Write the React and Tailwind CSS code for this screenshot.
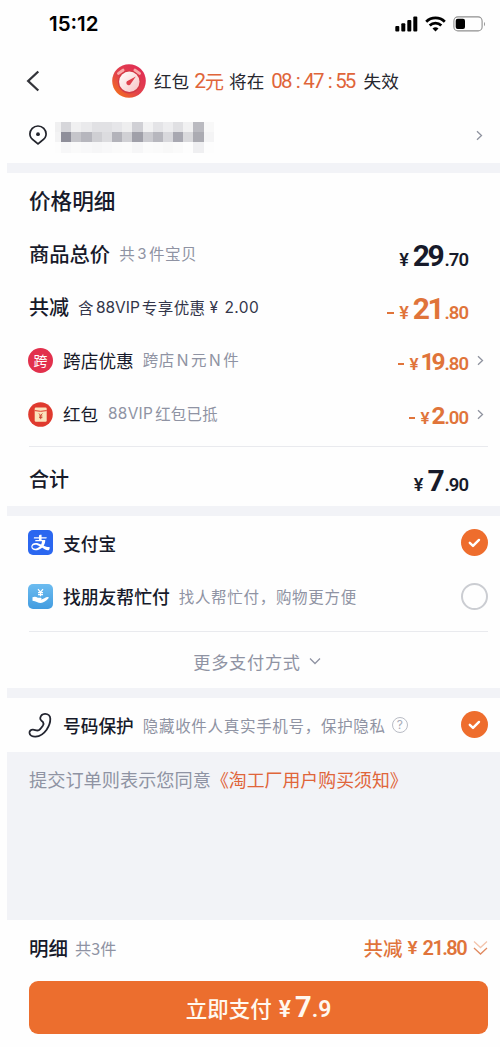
import React from "react";
import { AiOutlineAlipay } from "react-icons/ai";

const CJK = "font-['Noto_Sans_CJK_SC',sans-serif]";

const MOSAIC = [
  ["#f0f0f1", "#d6d6da", "#f0f0f1", "#eaeaec", "#e1e1e4", "#e1e1e4", "#e6e6e9", "#eeeeef", "#d0d0d5", "#f2f2f3", "#e4e4e7", "#ededef", "#e0e0e3", "#f1f1f2", "#babac0", "#f8f8f8"],
  ["#f3f3f4", "#8f8f9a", "#c5c5ca", "#b6b6bd", "#cfcfd3", "#dcdcdf", "#b3b3ba", "#d0d0d4", "#a0a0a9", "#cbcbd0", "#b7b7be", "#d8d8dc", "#a8a8b1", "#d9d9dc", "#ababb2", "#f4f4f5"],
  ["#fdfdfd", "#f7f7f8", "#fafafa", "#f8f8f9", "#f6f6f7", "#f8f8f9", "#fafafa", "#fbfbfb", "#f6f6f7", "#fbfbfb", "#fafafa", "#f8f8f8", "#fafafa", "#fdfdfd", "#efeff1", "#fdfdfd"],
];

const Chevron = () => (
  <svg width="7" height="11" viewBox="0 0 7 11" fill="none" stroke="#8f939f" strokeWidth="1.3">
    <path d="M1 1.2 5.5 5.5 1 9.8" />
  </svg>
);

const Check = () => (
  <div className="flex h-[27px] w-[27px] items-center justify-center rounded-full bg-[#ee6d2d]">
    <svg width="13" height="10" viewBox="0 0 13 10" fill="none" stroke="#fff" strokeWidth="2.4" strokeLinecap="round" strokeLinejoin="round">
      <path d="m1.8 4.8 3.2 3.1 6-6" />
    </svg>
  </div>
);

const Band = () => <div className="h-[10px] bg-[#f2f3f7]" />;

// big: 30px integer part, otherwise 25px
const Price = ({ minus, int, dec, big }) => (
  <div className="flex items-baseline font-['Roboto'] font-bold leading-none">
    {minus && (
      <span className={big ? "mb-[10px] mr-[5px] h-[2px] w-[7px] self-end bg-current" : "mb-[9px] mr-[5px] h-[2px] w-[6px] self-end bg-current"} />
    )}
    <span className={big ? "mr-[4px] text-[18px] font-semibold" : "mr-[2px] text-[17px] font-semibold"}>¥</span>
    <span className={big ? "text-[30px] tracking-[-2.6px]" : "text-[24.5px] tracking-[-3px]"}>{int}</span>
    <span className={big ? "ml-[2.600px] text-[18.5px] font-semibold tracking-[-1px]" : "ml-[2px] text-[18.5px] font-semibold tracking-[-1px]"}>.{dec}</span>
  </div>
);

const Row = ({ children }) => (
  <div className="flex h-[53.6px] items-center justify-between pl-[22px] pr-[12px]">{children}</div>
);

const Timer = () => (
  <svg width="34" height="34" viewBox="0 0 34 34" className="shrink-0">
    <defs>
      <linearGradient id="ring" x1="0.9" y1="0.1" x2="0.15" y2="0.9">
        <stop offset="0" stopColor="#e02c55" />
        <stop offset="0.6" stopColor="#e2434b" />
        <stop offset="1" stopColor="#f26b22" />
      </linearGradient>
      <linearGradient id="dial" x1="0" y1="0" x2="1" y2="1">
        <stop offset="0" stopColor="#fff" />
        <stop offset="1" stopColor="#f8c3c3" />
      </linearGradient>
    </defs>
    <circle cx="17" cy="17" r="16.8" fill="url(#ring)" />
    <path d="M6.5 9.4 11 6.2M27.5 9.4 23 6.2" stroke="#f9a8a8" strokeWidth="3" strokeLinecap="round" />
    <circle cx="17.3" cy="18" r="11.4" fill="#d23a45" />
    <circle cx="17.3" cy="17.8" r="10.2" fill="url(#dial)" />
    <path d="m23.8 12.4-5 7.3a2.3 2.3 0 1 1-2.9-3z" fill="#df3f4b" />
  </svg>
);

const StatusBar = () => (
  <div className="flex h-[47px] items-center justify-between pl-[42px] pr-[14px]">
    <span className="mt-[2px] font-['Inter'] text-[20.5px] font-semibold leading-none text-black">15:12</span>
    <div className="flex items-center gap-[7px]">
      <svg width="23" height="16" viewBox="0 0 23 16">
        <rect x="0.3" y="10" width="4" height="5.4" rx="1" />
        <rect x="6.3" y="7.3" width="4" height="8.1" rx="1" />
        <rect x="12.3" y="4" width="4" height="11.4" rx="1" />
        <rect x="18.3" y="0.6" width="4" height="14.8" rx="1" />
      </svg>
      <svg width="21" height="16" viewBox="0 0 21 16" fill="none" stroke="#000" strokeWidth="2.8">
        <path d="M1.2 5.7a13.4 13.4 0 0 1 18.6 0" />
        <path d="M4.7 9.4a8.3 8.3 0 0 1 11.6 0" />
        <path d="m10.5 15.6 3-3a4.3 4.3 0 0 0-6 0z" fill="#000" stroke="none" />
      </svg>
      <svg width="33" height="16" viewBox="0 0 33 16">
        <rect x="0.9" y="0.9" width="28.2" height="14" rx="4" fill="none" stroke="#8f8f8f" strokeWidth="1.1" />
        <rect x="2.7" y="2.7" width="9.3" height="10.4" rx="2" />
        <path d="M31 6v4.2c1.3-.7 1.3-3.5 0-4.2z" fill="#8f8f8f" />
      </svg>
    </div>
  </div>
);

const Header = () => (
  <div className="flex h-[67px] items-center pl-[19px] text-[17.6px] leading-none text-[#26272e]">
    <svg width="14" height="22" viewBox="0 0 14 22" fill="none" stroke="#33343a" strokeWidth="2.3">
      <path d="M12.3 1.5 2.2 11l10.1 9.5" />
    </svg>
    <div className="ml-[72px] flex items-center">
      <Timer />
      <span className="ml-[8px]">红包</span>
      <span className="ml-[5px] flex items-center text-[19px] text-[#e0653a]">
        <span className="mt-[2px] font-['Roboto'] text-[21px] tracking-[-1px]">2</span>元
      </span>
      <span className="ml-[5px]">将在</span>
      <span className="ml-[7px] mt-[2px] flex font-['Roboto'] text-[20.5px] tracking-[-1.8px] text-[#e0653a]">
        <span>08</span>
        <span className="w-[12.5px] pl-[1px] text-center">:</span>
        <span>47</span>
        <span className="w-[12.5px] pl-[1px] text-center">:</span>
        <span>55</span>
      </span>
      <span className="ml-[9px]">失效</span>
    </div>
  </div>
);

const Address = () => (
  <div className="flex h-[49px] items-start pl-[22px] pr-[17px]">
    <svg width="18" height="20" viewBox="0 0 18 20" className="mt-[11px]" fill="none" stroke="#22242c" strokeWidth="1.7">
      <path d="M5.5 16C2.8 14.4.9 12 .9 9.1a8.1 8.1 0 0 1 16.2 0c0 2.9-1.9 5.3-4.6 6.9L9 18.8z" />
      <circle cx="9" cy="9.2" r="1.9" fill="#22242c" stroke="none" />
    </svg>
    <div className="ml-[8px] mt-[8px]">
      {MOSAIC.map((line, i) => (
        <div key={i} className="flex">
          {line.map((c, j) => (
            <div
              key={j}
              className={j === 0 ? "h-[10.2px] w-[6px]" : "h-[10.2px] w-[10.2px]"}
              style={{ backgroundColor: c }}
            />
          ))}
        </div>
      ))}
    </div>
    <div className="ml-auto mt-[16px]">
      <Chevron />
    </div>
  </div>
);

const PriceDetail = () => (
  <div className="h-[333px] text-[#171a2a]">
    <Row>
      <h2 className="text-[21.6px] font-medium leading-none">价格明细</h2>
    </Row>
    <Row>
      <div className="flex items-center">
        <span className="text-[20.3px] font-medium leading-none">商品总价</span>
        <span className="ml-[9px] flex text-[15.5px] leading-none tracking-[0.5px] text-[#8f93a3]">
          共<span className="mx-[2px] font-['Inter'] text-[15px]">3</span>件宝贝
        </span>
      </div>
      <div className="mr-[20px] mt-[5px]"><Price big int="29" dec="70" /></div>
    </Row>
    <Row>
      <div className="flex items-center">
        <span className="mt-px text-[20px] font-medium leading-none">共减</span>
        <span className="ml-[9px] mt-px flex text-[15.5px] leading-none tracking-[0.4px] text-[#33364a]">
          含<span className="mx-[2px] font-['Inter'] tracking-[0px]">88VIP</span>专享优惠
          <span className="ml-[4px] font-['Inter']">¥</span>
          <span className="ml-[6px] font-['Inter']">2.00</span>
        </span>
      </div>
      <div className="mr-[20px] mt-[5px] text-[#e0743a]"><Price big minus int="21" dec="80" /></div>
    </Row>
    <Row>
      <div className="-ml-px flex items-center">
        <div className="flex h-[25px] w-[25px] items-center justify-center rounded-full bg-[#e2304c] pb-px text-[14px] leading-none text-white">跨</div>
        <span className="ml-[10px] text-[17.7px] leading-none">跨店优惠</span>
        <span className="ml-[9px] text-[15.5px] leading-none tracking-[0.5px] text-[#8f93a3]">
          跨店<span className="mx-[2px] font-['Inter']">N</span>元<span className="mx-[2px] font-['Inter']">N</span>件
        </span>
      </div>
      <div className="flex items-center text-[#e0743a]">
        <div className="mt-[3px]"><Price minus int="19" dec="80" /></div>
        <div className="ml-[9px] mr-[4px]"><Chevron /></div>
      </div>
    </Row>
    <Row>
      <div className="-ml-px flex items-center">
        <svg width="25" height="25" viewBox="0 0 25 25">
          <circle cx="12.5" cy="12.5" r="12.3" fill="#df3a2e" />
          <rect x="6.7" y="5.6" width="12" height="14.2" rx="1.2" fill="#fbe3bd" />
          <path d="M6.7 8.6q6 1.4 12 0" stroke="#df3a2e" strokeWidth="1" fill="none" />
          <path d="m11 11.5 1.7 2 1.7-2M12.7 13.5v3.7M11 14h3.4M11 15.6h3.4" stroke="#c8402c" strokeWidth="0.9" fill="none" />
        </svg>
        <span className="ml-[10px] text-[17.5px] leading-none">红包</span>
        <span className="ml-[10px] flex text-[15.4px] leading-none tracking-[0.3px] text-[#8f93a3]">
          <span className="mr-[2px] font-['Inter']">88VIP</span>红包已抵
        </span>
      </div>
      <div className="flex items-center text-[#e0743a]">
        <div className="mt-[4px]"><Price minus int="2" dec="00" /></div>
        <div className="ml-[9px] mr-[4px]"><Chevron /></div>
      </div>
    </Row>
    <div className="ml-[22px] mr-[12px] mt-[5px] h-px bg-[#e9eaee]" />
    <div className="pt-[5px]">
      <Row>
        <span className="mt-px text-[20px] font-medium leading-none">合计</span>
        <div className="mr-[20px] mt-[5px]"><Price big int="7" dec="90" /></div>
      </Row>
    </div>
  </div>
);

const Payment = () => (
  <div className="h-[172px] text-[#171a2a]">
    <Row>
      <div className="-ml-px flex items-center">
        <div className="flex h-[25px] w-[25px] items-center justify-center rounded-[5px] bg-[#2b67f0] text-white">
          <AiOutlineAlipay size={21} />
        </div>
        <span className="ml-[10px] mt-[2px] text-[17.7px] font-medium leading-none">支付宝</span>
      </div>
      <Check />
    </Row>
    <Row>
      <div className="-ml-px flex items-center">
        <div className="h-[25px] w-[25px] rounded-[5px] bg-gradient-to-b from-[#6cbcf0] to-[#429ce0]">
          <svg width="25" height="25" viewBox="0 0 25 25" fill="none" stroke="#fff" strokeWidth="1.2">
            <path d="m10 5.200 2.500 3 2.500-3M12.500 8.200v4M10 8.700h5M10 10.600h5" />
            <path d="M4.500 13.200c2-1 3.800-.6 5.300.6h3c1 0 1 1.600 0 1.600 2.500.2 4.500-2.400 7.300-2.300.8.1.8 1 .2 1.500-2.200 2.400-4.600 4.400-7.600 4.400-2.900 0-4.600-2-8.200-2.300z" fill="#fff" stroke="none" />
          </svg>
        </div>
        <span className="ml-[10px] mt-[2px] text-[17.8px] font-medium leading-none">找朋友帮忙付</span>
        <span className="ml-[9px] mt-px text-[15.5px] leading-none tracking-[0.7px] text-[#8f93a3]">找人帮忙付，购物更方便</span>
      </div>
      <div className="h-[27px] w-[27px] rounded-full border-2 border-[#cbcdd2]" />
    </Row>
    <div className="ml-[22px] mr-[12px] mt-[8px] h-px bg-[#e9eaee]" />
    <div className="flex h-[57px] items-center justify-center gap-[8px] pl-[7px] pt-px text-[17.2px] leading-none tracking-[0.7px] text-[#8f93a3]">
      更多支付方式
      <svg width="12" height="8" viewBox="0 0 12 8" fill="none" stroke="#8f93a3" strokeWidth="1.3">
        <path d="m1 1.5 5 5 5-5" />
      </svg>
    </div>
  </div>
);

const NumberProtect = () => (
  <div className="text-[#171a2a]">
    <Row>
      <div className="-ml-px flex items-center">
        <svg width="25" height="26" viewBox="0 0 25 26" fill="none" stroke="#22242f" strokeWidth="1.8" strokeLinejoin="round">
          <path d="M12.2 6.2C12.6 4 14.5 2 17 1.900c3-.1 5.200 2 5.300 4.900.1 3.400-1.300 7.400-3.700 11-2.800 4-6.600 6.600-11 6.900-3.200.2-5.900-1.200-6.100-3.800-.1-2 1.400-3.300 3.500-3.200 2.100.1 3.900 1.500 5.800.5 1.800-1 2.700-2.700 4-4.500.8-1.200 1.100-2.400.2-3.600-1.100-1.400-3.100-1.800-2.800-3.900z" />
        </svg>
        <span className="ml-[10px] mt-[2px] text-[17.7px] font-medium leading-none">号码保护</span>
        <span className="ml-[9px] mt-[2px] text-[15.5px] leading-none tracking-[0.7px] text-[#8f93a3]">隐藏收件人真实手机号，保护隐私</span>
        <div className="ml-[6px] flex h-[16px] w-[16px] items-center justify-center rounded-full border border-[#b9bcc5] font-['Inter'] text-[12px] leading-none text-[#a9acb8]">?</div>
      </div>
      <Check />
    </Row>
  </div>
);

const Footer = () => (
  <div className="h-[127px] pl-[22px] pr-[12px]">
    <div className="flex h-[56px] items-center justify-between">
      <div className="flex items-center leading-none">
        <span className="text-[19.5px] font-medium text-[#171a2a]">明细</span>
        <span className="ml-[7px] text-[16.2px] text-[#8f93a3]">共3件</span>
      </div>
      <div className="flex items-center leading-none text-[#e0743a]">
        <span className="text-[19.5px] font-medium">共减</span>
        <span className="ml-[5px] font-['Roboto'] text-[19px] font-semibold">¥</span>
        <span className="ml-[5px] font-['Roboto'] text-[20px] font-semibold tracking-[-1.6px]">21.80</span>
        <svg width="15" height="16" viewBox="0 0 15 16" fill="none" strokeWidth="1.3" className="ml-[7px]">
          <path d="m1 1.5 6.5 6 6.5-6" stroke="#f3c4ac" />
          <path d="m1 8 6.5 6L14 8" stroke="#e08a60" />
        </svg>
      </div>
    </div>
    <button className="mt-[5px] flex h-[53px] w-full items-center justify-center rounded-[9px] bg-[#ec6e2e] text-[21.5px] leading-none text-[#fff8ef]">
      <span className="font-medium">立即支付</span>
      <span className="ml-[7px] flex items-baseline font-['Roboto'] font-semibold">
        <span className="text-[23px]">¥</span>
        <span className="ml-[4px] text-[29px] font-bold">7</span>
        <span className="text-[23px]">.9</span>
      </span>
    </button>
  </div>
);

export default function App() {
  return (
    <div lang="zh-CN" className={`h-[1047px] w-[500px] overflow-hidden bg-[#fefefe] pl-[7px] ${CJK}`}>
      <StatusBar />
      <Header />
      <Address />
      <Band />
      <PriceDetail />
      <Band />
      <Payment />
      <Band />
      <NumberProtect />
      <div className="h-[168.4px] bg-[#f2f3f7] pl-[22px] pt-[18px] text-[18.2px] leading-none text-[#8f93a3]">
        提交订单则表示您同意<span className="text-[17.9px] text-[#e0653a]">《淘工厂用户购买须知》</span>
      </div>
      <Footer />
    </div>
  );
}
